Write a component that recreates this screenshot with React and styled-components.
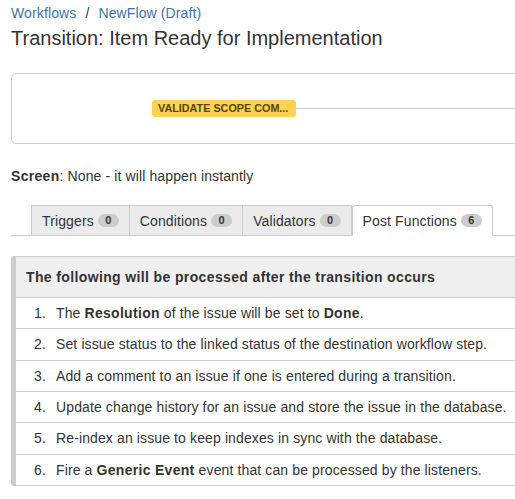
import React from "react";
import styled, { createGlobalStyle } from "styled-components";

const GlobalStyle = createGlobalStyle`
  html, body {
    margin: 0;
    padding: 0;
    overflow: hidden;
    background: #fff;
  }
  body {
    font-family: "Liberation Sans", Arial, sans-serif;
    font-size: 14px;
    letter-spacing: 0.12px;
    color: #333;
  }
  b {
    letter-spacing: 0.3px;
  }
`;

const Page = styled.div`
  width: 600px;
  padding: 3px 0 0 11px;
`;

const Breadcrumbs = styled.ol`
  display: flex;
  list-style: none;
  margin: 0;
  padding: 0;
  line-height: 20px;

  li + li::before {
    content: "/";
    padding: 0 9px;
    color: #333;
  }

  a {
    color: #3b73af;
    text-decoration: none;
  }
`;

const Title = styled.h1`
  margin: 3px 0 0;
  font-size: 20px;
  font-weight: normal;
  line-height: 24px;
  letter-spacing: 0;
  color: #333;
`;

const Diagram = styled.div`
  margin-top: 23px;
  height: 69px;
  border: 1px solid #ccc;
  border-radius: 5px;
  display: flex;
  align-items: center;
  padding-left: 140px;
`;

const Lozenge = styled.span`
  box-sizing: border-box;
  width: 144px;
  height: 17px;
  padding: 0 6px;
  border-radius: 3px;
  background: #ffd351;
  color: #594300;
  font-size: 10.8px;
  font-weight: bold;
  line-height: 17px;
  letter-spacing: 0;
  white-space: nowrap;
`;

const Connector = styled.div`
  flex: 1;
  height: 1px;
  background: #ccc;
`;

const ScreenInfo = styled.p`
  margin: 22px 0 0;
  line-height: 20px;
`;

const TabMenu = styled.ul`
  display: flex;
  list-style: none;
  margin: 19px 0 0;
  padding: 0 0 0 20px;
  border-bottom: 1px solid #ccc;
`;

const Tab = styled.li`
  box-sizing: border-box;
  height: 31px;
  margin-bottom: -1px;
  display: flex;
  align-items: center;
  gap: 4px;
  padding: 0 10px;
  border: 1px solid #ccc;
  border-bottom: ${(p) => (p.$active ? "1px solid #fff" : "1px solid #ccc")};
  border-left: ${(p) => (p.$first || p.$active ? "1px solid #ccc" : "none")};
  border-radius: ${(p) => (p.$active ? "3px 3px 0 0" : "0")};
  background: ${(p) => (p.$active ? "#fff" : "#ebebeb")};
  line-height: 20px;
`;

const Badge = styled.span`
  display: inline-block;
  min-width: 7px;
  height: 13px;
  padding: 0 7px;
  border-radius: 2em;
  background: #ccc;
  color: #333;
  font-size: 11px;
  font-weight: bold;
  line-height: 13px;
  letter-spacing: 0;
  text-align: center;
`;

const Panel = styled.div`
  margin-top: 20px;
  border: 1px solid #ccc;
  border-left: 5px solid #ccc;
  border-right: none;
  border-radius: 3px 0 0 3px;
`;

const PanelHeader = styled.h3`
  margin: 0;
  padding: 10px;
  background: #f0f0f0;
  border-bottom: 1px solid #ccc;
  font-size: 14px;
  font-weight: bold;
  line-height: 20px;
  letter-spacing: 0.37px;
`;

const Steps = styled.ol`
  list-style: none;
  margin: 0;
  padding: 0;
  counter-reset: step;
`;

const Step = styled.li`
  counter-increment: step;
  padding: 5px 0 5.33px;
  line-height: 20px;
  white-space: nowrap;

  & + & {
    border-top: 1px solid #ccc;
  }

  &::before {
    content: counter(step) ".";
    display: inline-block;
    width: 30px;
    margin-right: 10px;
    text-align: right;
  }
`;

const tabs = [
  { label: "Triggers", count: 0 },
  { label: "Conditions", count: 0 },
  { label: "Validators", count: 0 },
  { label: "Post Functions", count: 6, active: true },
];

export default function App() {
  return (
    <>
      <GlobalStyle />
      <Page>
        <Breadcrumbs>
          <li>
            <a href="#">Workflows</a>
          </li>
          <li>
            <a href="#">NewFlow (Draft)</a>
          </li>
        </Breadcrumbs>
        <Title>Transition: Item Ready for Implementation</Title>

        <Diagram>
          <Lozenge>VALIDATE SCOPE COM...</Lozenge>
          <Connector />
        </Diagram>

        <ScreenInfo>
          <b>Screen</b>: None - it will happen instantly
        </ScreenInfo>

        <TabMenu>
          {tabs.map((t, i) => (
            <Tab key={t.label} $active={t.active} $first={i === 0}>
              {t.label}
              <Badge>{t.count}</Badge>
            </Tab>
          ))}
        </TabMenu>

        <Panel>
          <PanelHeader>The following will be processed after the transition occurs</PanelHeader>
          <Steps>
            <Step>
              The <b>Resolution</b> of the issue will be set to <b>Done</b>.
            </Step>
            <Step>Set issue status to the linked status of the destination workflow step.</Step>
            <Step>Add a comment to an issue if one is entered during a transition.</Step>
            <Step>Update change history for an issue and store the issue in the database.</Step>
            <Step>Re-index an issue to keep indexes in sync with the database.</Step>
            <Step>
              Fire a <b>Generic Event</b> event that can be processed by the listeners.
            </Step>
          </Steps>
        </Panel>
      </Page>
    </>
  );
}
